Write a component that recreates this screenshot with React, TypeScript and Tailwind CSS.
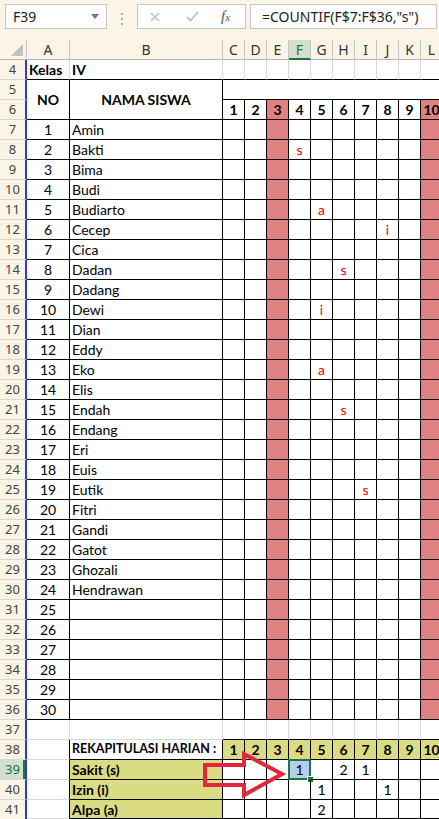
import React from "react";

const NAMES = [
  "Amin", "Bakti", "Bima", "Budi", "Budiarto", "Cecep", "Cica", "Dadan",
  "Dadang", "Dewi", "Dian", "Eddy", "Eko", "Elis", "Endah", "Endang",
  "Eri", "Euis", "Eutik", "Fitri", "Gandi", "Gatot", "Ghozali", "Hendrawan",
];

const LETTERS = ["A", "B", "C", "D", "E", "F", "G", "H", "I", "J", "K", "L"];
const DAYS = [0, 1, 2, 3, 4, 5, 6, 7, 8, 9];

// day column index (0 = C) -> mark
const MARKS: Record<number, Record<number, string>> = {
  8: { 3: "s" },
  11: { 4: "a" },
  12: { 7: "i" },
  14: { 5: "s" },
  16: { 4: "i" },
  19: { 4: "a" },
  21: { 5: "s" },
  25: { 6: "s" },
};

const RECAP: { row: number; label: string; vals: Record<number, string> }[] = [
  { row: 39, label: "Sakit (s)", vals: { 3: "1", 5: "2", 6: "1" } },
  { row: 40, label: "Izin (i)", vals: { 4: "1", 7: "1" } },
  { row: 41, label: "Alpa (a)", vals: { 4: "2" } },
];

const isPink = (d: number) => d === 2 || d === 9;

const BASE = "flex items-center overflow-hidden whitespace-nowrap border-r border-b";
const GRID = "border-r-[#d3ddd3] border-b-[#d3ddd3]";
const BLACK = "border-r-black border-b-black";

function RowHead({ n, selected = false }: { n: number; selected?: boolean }) {
  return (
    <div
      className={`flex items-center justify-center border-b border-b-[#dcd6c8] border-r-2 border-r-[#2a3ec9] text-[13px] font-['Noto_Sans',sans-serif] ${
        selected
          ? "bg-[#d3dfcf] text-[#217346] shadow-[inset_-2px_0_0_#217346]"
          : "bg-[#fbf5e7] text-[#444]"
      }`}
    >
      {n}
    </div>
  );
}

function FormulaBar() {
  return (
    <div className="flex h-[40px] items-start bg-[#fbf5e7] pl-[5px] pt-[4px] font-['Noto_Sans',sans-serif]">
      <div className="flex h-[25px] w-[102px] items-center justify-between border border-[#c6c6c6] bg-white pl-[7px] pr-[7px]">
        <span className="text-[14px] text-[#222]">F39</span>
        <svg width="8" height="5" viewBox="0 0 8 5">
          <path d="M0 0h8L4 5z" fill="#777" />
        </svg>
      </div>
      <div className="mt-[9px] flex w-[30px] flex-col items-center gap-[3px]">
        <span className="h-[2px] w-[2px] bg-[#aaa]" />
        <span className="h-[2px] w-[2px] bg-[#aaa]" />
        <span className="h-[2px] w-[2px] bg-[#aaa]" />
      </div>
      <div className="flex h-[25px] w-[109px] items-center border border-[#c6c6c6] bg-white">
        <svg className="ml-[12px]" width="10" height="10" viewBox="0 0 10 10">
          <path d="M1 1l8 8M9 1l-8 8" stroke="#b9b9b9" strokeWidth="1.3" />
        </svg>
        <svg className="ml-[26px]" width="13" height="11" viewBox="0 0 13 11">
          <path d="M1 6l3.5 3.5L12 1" fill="none" stroke="#b9b9b9" strokeWidth="1.6" />
        </svg>
        <span className="ml-[22px] font-['Liberation_Serif',serif] text-[15px] italic text-[#555]">
          f<span className="text-[11px]">x</span>
        </span>
      </div>
      <div className="ml-[4px] mr-[2px] flex h-[25px] flex-1 items-center border border-[#c6c6c6] bg-white pl-[11px] text-[14px] text-[#222]">
        =COUNTIF(F$7:F$36,"s")
      </div>
    </div>
  );
}

function ColumnHeaders() {
  return (
    <>
      <div className="relative border-b border-r border-b-[#b5b5b5] border-r-[#c8c8c8] bg-[#fbf5e7]">
        <svg className="absolute bottom-[3px] right-[3px]" width="12" height="12" viewBox="0 0 12 12">
          <path d="M12 0v12H0z" fill="#c2c2c2" />
        </svg>
      </div>
      {LETTERS.map((l) =>
        l === "F" ? (
          <div
            key={l}
            className="flex items-center justify-center border-r border-b-2 border-r-[#c8c8c8] border-b-[#217346] bg-[#d3dfcf] text-[14px] text-[#217346] font-['Noto_Sans',sans-serif]"
          >
            {l}
          </div>
        ) : (
          <div
            key={l}
            className="flex items-center justify-center border-r border-b border-r-[#c8c8c8] border-b-[#b5b5b5] bg-[#fbf5e7] text-[14px] text-[#333] font-['Noto_Sans',sans-serif]"
          >
            {l}
          </div>
        ),
      )}
    </>
  );
}

function Arrow() {
  return (
    <svg className="absolute left-[198px] top-[748px]" width="92" height="54" viewBox="0 0 92 54">
      <path
        d="M7 17H46V6L84 26L46 47V37H7Z"
        fill="none"
        stroke="#e3263b"
        strokeWidth="4"
        strokeLinejoin="miter"
      />
    </svg>
  );
}

export default function App() {
  const students = Array.from({ length: 30 }, (_, i) => i);

  return (
    <div className="relative h-[819px] w-[439px] overflow-hidden bg-white text-black">
      <FormulaBar />
      <div className="grid w-[443px] grid-cols-[27px_43px_153px_repeat(10,22px)] auto-rows-[20px] font-['Lato','Liberation_Sans',sans-serif] text-[14px]">
        <ColumnHeaders />

        {/* row 4 */}
        <RowHead n={4} />
        <div className={`${BASE} border-r-[#d3ddd3] border-b-black pl-[2px] font-bold`}>Kelas</div>
        <div className={`${BASE} border-r-[#d3ddd3] border-b-black pl-[2px] font-bold`}>IV</div>
        {DAYS.map((d) => (
          <div key={d} className={`${BASE} border-r-[#d3ddd3] border-b-black`} />
        ))}

        {/* rows 5-6 header */}
        <RowHead n={5} />
        <div className={`${BASE} ${BLACK} row-span-2 justify-center font-bold`}>NO</div>
        <div className={`${BASE} ${BLACK} row-span-2 justify-center font-bold`}>NAMA SISWA</div>
        <div className={`${BASE} ${BLACK} col-span-10 bg-white`} />
        <RowHead n={6} />
        {DAYS.map((d) => (
          <div
            key={d}
            className={`${BASE} ${BLACK} justify-center font-bold ${isPink(d) ? "bg-[#e08181]" : ""}`}
          >
            {d + 1}
          </div>
        ))}

        {/* students */}
        {students.map((i) => {
          const row = i + 7;
          return (
            <React.Fragment key={row}>
              <RowHead n={row} />
              <div className={`${BASE} ${BLACK} justify-center`}>{i + 1}</div>
              <div className={`${BASE} ${BLACK} pl-[2px]`}>{NAMES[i] ?? ""}</div>
              {DAYS.map((d) => (
                <div
                  key={d}
                  className={`${BASE} ${BLACK} justify-center text-[#ff0000] ${isPink(d) ? "bg-[#e08181]" : ""}`}
                >
                  {MARKS[row]?.[d] ?? ""}
                </div>
              ))}
            </React.Fragment>
          );
        })}

        {/* row 37 */}
        <RowHead n={37} />
        <div className={`${BASE} ${GRID}`} />
        <div className={`${BASE} ${GRID}`} />
        {DAYS.map((d) => (
          <div key={d} className={`${BASE} border-r-[#d3ddd3] border-b-black`} />
        ))}

        {/* row 38 */}
        <RowHead n={38} />
        <div className={`${BASE} border-r-black border-b-[#d3ddd3]`} />
        <div className={`${BASE} ${BLACK} pl-[2px] text-[12.5px] font-bold`}>REKAPITULASI HARIAN :</div>
        {DAYS.map((d) => (
          <div key={d} className={`${BASE} ${BLACK} justify-center bg-[#dbdb84] font-bold`}>
            {d + 1}
          </div>
        ))}

        {/* recap rows */}
        {RECAP.map((r) => {
          const last = r.row === 41;
          const bottom = last ? "border-b-2 border-b-[#2a3ec9]" : "";
          return (
            <React.Fragment key={r.row}>
              <RowHead n={r.row} selected={r.row === 39} />
              <div className={`${BASE} border-r-black border-b-[#d3ddd3] ${bottom}`} />
              <div className={`${BASE} ${BLACK} bg-[#dbdb84] pl-[2px] font-bold ${bottom}`}>{r.label}</div>
              {DAYS.map((d) => {
                const selected = r.row === 39 && d === 3;
                return (
                  <div
                    key={d}
                    className={`${BASE} ${BLACK} relative justify-center overflow-visible ${bottom} ${
                      selected ? "bg-[#b5cdee]" : ""
                    }`}
                  >
                    {r.vals[d] ?? ""}
                    {selected && (
                      <>
                        <span className="absolute -left-[1px] -top-[1px] h-[21px] w-[23px] border-2 border-[#217346]" />
                        <span className="absolute -bottom-[4px] -right-[4px] h-[7px] w-[7px] border border-white bg-[#217346]" />
                      </>
                    )}
                  </div>
                );
              })}
            </React.Fragment>
          );
        })}
      </div>
      <Arrow />
    </div>
  );
}
